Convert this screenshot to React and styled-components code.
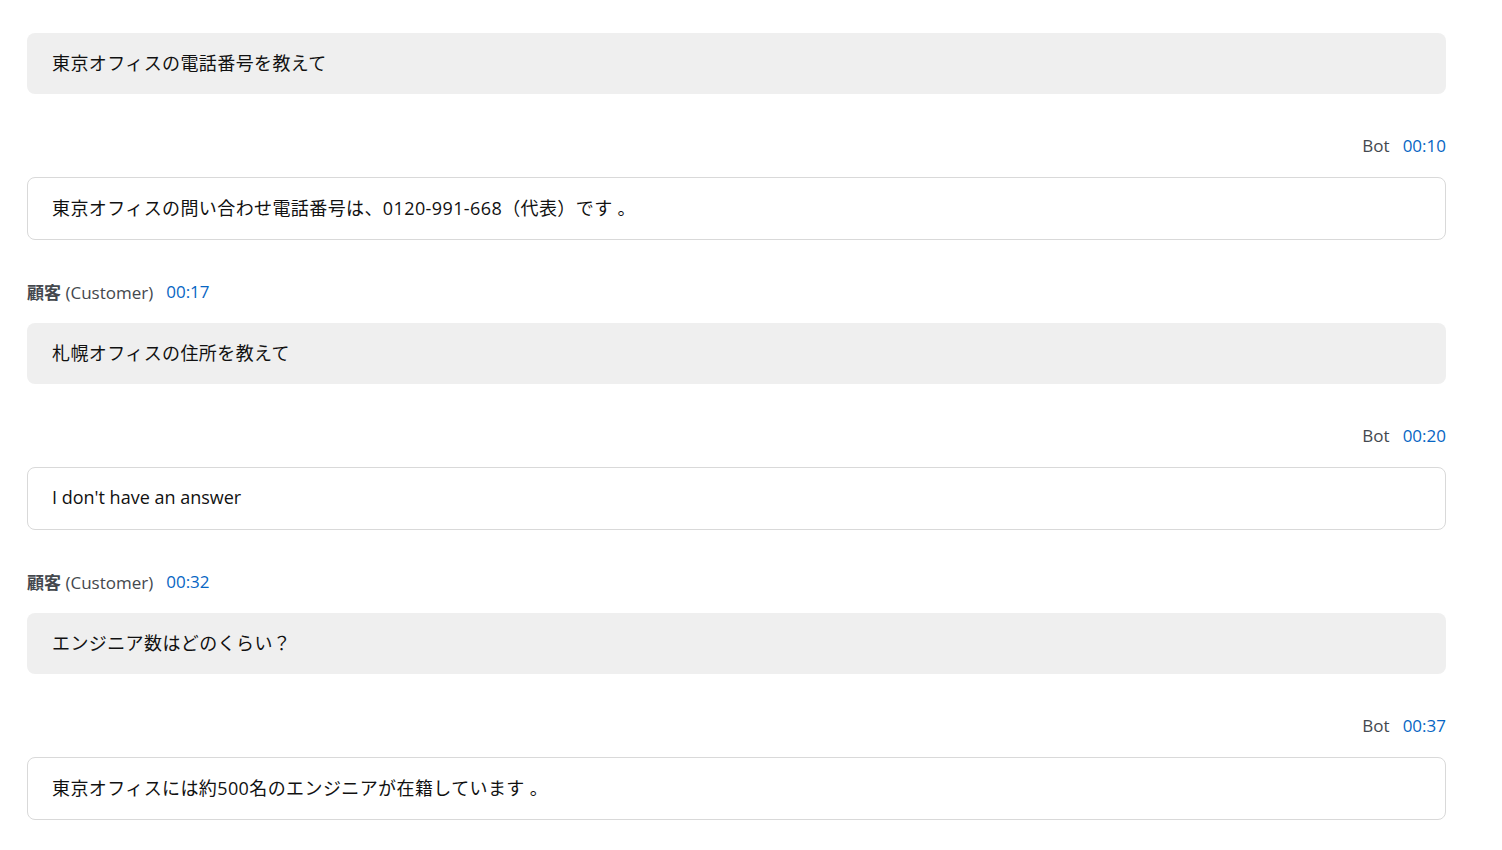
import React from "react";
import styled, { createGlobalStyle } from "styled-components";

const GlobalStyle = createGlobalStyle`
  html, body {
    margin: 0;
    padding: 0;
    background: #fff;
  }
  body {
    font-family: "Open Sans", "Noto Sans CJK JP", sans-serif;
    color: #16191f;
  }
`;

const Container = styled.div`
  width: 1419px;
  margin-left: 27px;
  padding-top: 33px;
  display: flex;
  flex-direction: column;
`;

const Message = styled.div`
  display: flex;
  flex-direction: column;
  margin-bottom: 42px;
`;

const Header = styled.div`
  display: flex;
  justify-content: ${(p) => (p.$bot ? "flex-end" : "flex-start")};
  align-items: center;
  gap: 13px;
  height: 18px;
  margin-bottom: 23px;
  font-size: 17px;
`;

const Sender = styled.span`
  color: #44484e;
  b {
    font-weight: 700;
  }
`;

const Time = styled.span`
  color: #0766c4;
`;

const Bubble = styled.div`
  box-sizing: border-box;
  height: ${(p) => (p.$bot ? "63px" : "61px")};
  display: flex;
  align-items: center;
  padding: 0 24px 4px;
  padding-left: ${(p) => (p.$bot ? "24px" : "25px")};
  border-radius: 8px;
  font-size: 18px;
  color: #111;
  background: ${(p) => (p.$bot ? "#fff" : "#efefef")};
  border: ${(p) => (p.$bot ? "1px solid #d9d9d9" : "none")};
`;

const Cjk = styled.span`
  letter-spacing: 0.4px;
`;

const messages = [
  { bot: false, text: "東京オフィスの電話番号を教えて" },
  { bot: true, time: "00:10", text: "東京オフィスの問い合わせ電話番号は、0120-991-668（代表）です 。" },
  { bot: false, time: "00:17", text: "札幌オフィスの住所を教えて" },
  { bot: true, time: "00:20", text: "I don't have an answer", latin: true },
  { bot: false, time: "00:32", text: "エンジニア数はどのくらい？" },
  { bot: true, time: "00:37", text: "東京オフィスには約500名のエンジニアが在籍しています 。" },
];

const App = () => {
  return (
    <>
      <GlobalStyle />
      <Container>
        {messages.map((m, i) => (
          <Message key={i}>
            {m.time && (
              <Header $bot={m.bot}>
                {m.bot ? (
                  <Sender>Bot</Sender>
                ) : (
                  <Sender>
                    <b>顧客</b> (Customer)
                  </Sender>
                )}
                <Time>{m.time}</Time>
              </Header>
            )}
            <Bubble $bot={m.bot}>
              {m.latin ? m.text : <Cjk>{m.text}</Cjk>}
            </Bubble>
          </Message>
        ))}
      </Container>
    </>
  );
};

export default App;
